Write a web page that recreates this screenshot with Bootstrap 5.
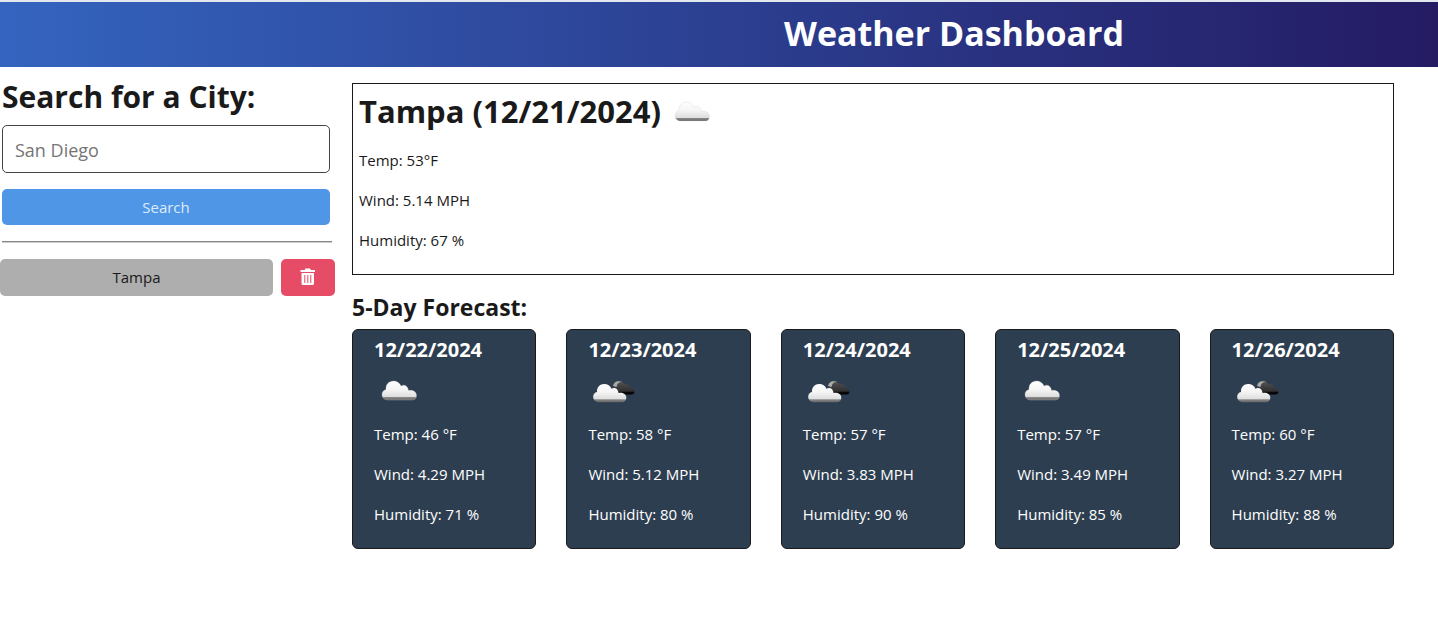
<!DOCTYPE html>
<html lang="en">
<head>
<meta charset="utf-8">
<meta name="viewport" content="width=device-width, initial-scale=1">
<title>Weather Dashboard</title>
<link href="https://cdn.jsdelivr.net/npm/bootstrap@5.3.0/dist/css/bootstrap.min.css" rel="stylesheet">
<style>
  body { font: 15px/24px "Open Sans", "Noto Sans", sans-serif; color: #1a1a1a; background: #fff; }
  h1, h2, h3, h4 { font-weight: 700; margin: 0; }
  .topbar { border-top: 2px solid #e3e7ee; background: linear-gradient(90deg, #3464bf, #241b63); padding: 7px 0 10px 470px; }
  .topbar h1 { font-size: 34px; line-height: 48px; color: #fff; text-align: center; }
  .shell { gap: 17px; padding: 16px 44px 16px 0; }
  .sidebar { flex: 0 0 335px; }
  .search-box { padding: 0 5px 0 2px; }
  .search-box h2 { font-size: 30px; line-height: 28px; margin-bottom: 14px; }
  .search-box .form-control { height: 48px; padding: 2px 12px 0; font-size: 18px; border-color: #444; border-radius: 5px; }
  .search-box .form-control::placeholder { color: #757575; opacity: 1; }
  .btn { --bs-btn-font-size: 15px; --bs-btn-line-height: 24px; --bs-btn-border-radius: 5px; border: 0; }
  .btn-find { --bs-btn-bg: #5096e6; --bs-btn-color: #dcebfb; --bs-btn-hover-bg: #4186d6; --bs-btn-hover-color: #fff; height: 36px; margin: 16px 0; }
  .divider { border-top: 1px solid #888; border-bottom: 1px solid #ccc; margin: 0 -2px 16px 0; }
  .history { gap: 8px; }
  .history .btn { height: 37px; padding-top: 5px; }
  .btn-city { --bs-btn-bg: #aeaeae; --bs-btn-color: #1a1a1a; --bs-btn-hover-bg: #9d9d9d; }
  .btn-remove { --bs-btn-bg: #e64c66; --bs-btn-hover-bg: #d03b54; width: 54px; }
  .today { border: 1px solid #1a1a1a; padding: 3px 6px 6px; }
  .today h2 { font-size: 31px; line-height: 48px; gap: 6px; margin-bottom: 11px; }
  .today p, .day p { margin-bottom: 16px; }
  .forecast-title { font-size: 23px; line-height: 28px; margin: 18px 0 8px; }
  .forecast { display: grid; grid-template-columns: repeat(5, 1fr); gap: 30px; }
  .day { background: #2d3e50; color: #fff; border: 1px solid #1a1a1a; border-radius: 6px; padding: 6px 21px; }
  .day h4 { font-size: 20px; line-height: 28px; }
  .sky { display: block; width: 50px; height: 50px; flex: none; }
  .day .sky { margin: 2px 0 6px; }
  @media (max-width: 991px) {
    .topbar { padding-left: 0; }
    .shell { flex-direction: column; padding-right: 16px; }
    .sidebar { flex-basis: auto; }
    .forecast { grid-template-columns: repeat(auto-fill, minmax(180px, 1fr)); }
  }
</style>
</head>
<body>
<svg width="0" height="0" class="position-absolute" aria-hidden="true">
  <defs>
    <linearGradient id="pale" x1="0" y1="0" x2="0" y2="1">
      <stop offset="0" stop-color="#fff"/><stop offset=".45" stop-color="#f5f5f5"/><stop offset=".82" stop-color="#dedede"/><stop offset=".87" stop-color="#858585"/><stop offset="1" stop-color="#666"/>
    </linearGradient>
    <linearGradient id="dark" x1="0" y1="0" x2="0" y2="1">
      <stop offset="0" stop-color="#555"/><stop offset=".75" stop-color="#303030"/><stop offset=".85" stop-color="#080808"/><stop offset="1" stop-color="#000"/>
    </linearGradient>
    <path id="puff" d="M13.500 34C10 34 8 31.300 8 28.500C8 26 9.500 24 12 23.500C11.500 18.500 15 15 19.500 15C23 15 26 17 27 20C30.500 18 34 20 34.500 24.500C38.500 23.800 42.500 25.500 42.500 29.500C42.500 32 41 34 38.500 34Z"/>
    <symbol id="cloud" viewBox="0 0 50 50"><use href="#puff" fill="url(#pale)" stroke="#ccc" stroke-width=".3"/></symbol>
    <symbol id="broken" viewBox="0 0 50 50">
      <path d="M27 28.500C24 26 24 23 26 21C25.500 17 28 15 31 15C33.500 15 35.500 16.500 36.500 18.500C39 17.500 42 19 42 22C44.500 21.500 46.500 23 46.500 25.500C46.500 27.500 45.500 28.500 43.500 28.500Z" fill="url(#dark)"/>
      <path d="M25 20C25.500 17 28 15 31 15.200C32 15.200 33 15.500 34 16C31 15.800 29 17.500 28.500 21Z" fill="#aaa"/>
      <use href="#puff" transform="translate(-2.500 3.500) scale(.96 .96)" fill="url(#pale)"/>
    </symbol>
  </defs>
</svg>

<header class="topbar"><h1>Weather Dashboard</h1></header>

<div class="shell d-flex">
  <aside class="sidebar">
    <form class="search-box">
      <h2><label for="city">Search for a City:</label></h2>
      <input type="text" class="form-control" id="city" placeholder="San Diego">
      <button type="button" class="btn btn-find w-100 d-block">Search</button>
      <div class="divider"></div>
    </form>
    <div class="history d-flex">
      <button type="button" class="btn btn-city flex-grow-1">Tampa</button>
      <button type="button" class="btn btn-remove d-flex align-items-center justify-content-center" aria-label="Remove Tampa">
        <svg width="16" height="18" viewBox="0 0 16 18" fill="#fff"><path d="M.500 2H5V1Q5 .500 5.500 .500H10Q10.500 .500 10.500 1V2H15V4H.500Z"/><path fill-rule="evenodd" d="M1.500 5H14V15.500Q14 17 12.500 17H3Q1.500 17 1.500 15.500ZM4.300 7V15H5.300V7ZM7.300 7V15H8.300V7ZM10.300 7V15H11.300V7Z"/></svg>
      </button>
    </div>
  </aside>

  <main class="flex-grow-1">
    <section class="today">
      <h2 class="d-flex"><span>Tampa (12/21/2024)</span><svg class="sky"><use href="#cloud"/></svg></h2>
      <p>Temp: 53°F</p>
      <p>Wind: 5.14 MPH</p>
      <p>Humidity: 67 %</p>
    </section>
    <h3 class="forecast-title">5-Day Forecast:</h3>
    <section class="forecast">
      <article class="day"><h4>12/22/2024</h4><svg class="sky"><use href="#cloud"/></svg><p>Temp: 46 °F</p><p>Wind: 4.29 MPH</p><p>Humidity: 71 %</p></article>
      <article class="day"><h4>12/23/2024</h4><svg class="sky"><use href="#broken"/></svg><p>Temp: 58 °F</p><p>Wind: 5.12 MPH</p><p>Humidity: 80 %</p></article>
      <article class="day"><h4>12/24/2024</h4><svg class="sky"><use href="#broken"/></svg><p>Temp: 57 °F</p><p>Wind: 3.83 MPH</p><p>Humidity: 90 %</p></article>
      <article class="day"><h4>12/25/2024</h4><svg class="sky"><use href="#cloud"/></svg><p>Temp: 57 °F</p><p>Wind: 3.49 MPH</p><p>Humidity: 85 %</p></article>
      <article class="day"><h4>12/26/2024</h4><svg class="sky"><use href="#broken"/></svg><p>Temp: 60 °F</p><p>Wind: 3.27 MPH</p><p>Humidity: 88 %</p></article>
    </section>
  </main>
</div>
<script src="https://cdn.jsdelivr.net/npm/bootstrap@5.3.0/dist/js/bootstrap.bundle.min.js"></script>
</body>
</html>
